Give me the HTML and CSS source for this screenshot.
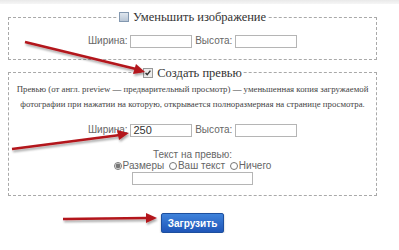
FILE: index.html
```html
<!DOCTYPE html>
<html lang="ru">
<head>
<meta charset="UTF-8" />
<meta name="viewport" content="width=device-width, initial-scale=1" />
<title>Загрузка изображения</title>
<link rel="stylesheet" href="styles.css">
</head>
<body>

<div class="topband"></div>

<form class="upload">
  <fieldset class="box box-resize">
    <legend><input type="checkbox" class="chk" /> Уменьшить изображение</legend>
    <div class="row">
      <label>Ширина:</label> <input type="text" class="num" />
      <label>Высота:</label> <input type="text" class="num" />
    </div>
  </fieldset>

  <fieldset class="box box-preview">
    <legend><input type="checkbox" class="chk" checked /> Создать превью</legend>
    <p class="note">Превью (от англ. preview — предварительный просмотр) — уменьшенная копия загружаемой<br>фотографии при нажатии на которую, открывается полноразмерная на странице просмотра.</p>
    <div class="row">
      <label>Ширина:</label> <input type="text" class="num" value="250" />
      <label>Высота:</label> <input type="text" class="num" />
    </div>
    <div class="caption">
      <div>Текст на превью:</div>
      <div class="radios">
        <label><input type="radio" name="cap" checked />Размеры</label>
        <label><input type="radio" name="cap" />Ваш текст</label>
        <label><input type="radio" name="cap" />Ничего</label>
      </div>
      <input type="text" class="captext" />
    </div>
  </fieldset>

  <div class="actions">
    <button type="button" class="btn">Загрузить</button>
  </div>
</form>

<!-- красные стрелки поверх скриншота -->
<svg class="arrows" width="399" height="250" viewBox="0 0 399 250">
  <defs>
    <filter id="sh" x="-10%" y="-50%" width="120%" height="200%">
      <feDropShadow dx="1" dy="2" stdDeviation="1.2" flood-color="#000" flood-opacity="0.35" />
    </filter>
  </defs>
  <g fill="#b3161b" stroke="#b3161b" filter="url(#sh)">
    <line x1="25" y1="42" x2="136" y2="69" stroke-width="2.6" />
    <polygon points="145,72 133,74 136,64" stroke="none" />
    <line x1="12" y1="149" x2="120" y2="135" stroke-width="2.6" />
    <polygon points="129,133 119,140 117,130" stroke="none" />
    <line x1="63" y1="219" x2="147" y2="218" stroke-width="2.6" />
    <polygon points="157,218 146,223 146,213" stroke="none" />
  </g>
</svg>

</body>
</html>
```

FILE: styles.css
```css
body {
  margin: 0;
  background: #fff;
  font-family: 'Liberation Serif', 'Times New Roman', serif;
  color: #333;
}
.topband {
  height: 4px;
  background: linear-gradient(#e9e9e9, #f6f6f6);
}
.upload {
  margin: 5px 0 0 8px;
  width: 369px;
}
.box {
  margin: 0;
  padding: 0 4px;
  border: 1px dashed #a9a9a9;
  box-sizing: border-box;
  width: 369px;
  text-align: center;
}
.box legend {
  margin: 0 auto;
  padding: 0 1px;
  font-size: 12.5px;
  line-height: 16px;
  color: #333;
}
.box-resize {
  padding-top: 9px;
  padding-bottom: 11px;
}
.box-preview {
  margin-top: 5px;
  padding-bottom: 10px;
}
.chk {
  appearance: none;
  width: 10px;
  height: 10px;
  margin: 0 1px 0 0;
  vertical-align: -1px;
  border: 1px solid #8398b0;
  background: linear-gradient(#dfe6ee, #b9c6d5);
}
.chk:checked {
  border-color: #999;
  background: #ececec url("data:image/svg+xml,%3Csvg xmlns='http://www.w3.org/2000/svg' viewBox='0 0 10 10'%3E%3Cpath d='M2 5l2 2 4-5' fill='none' stroke='%23333' stroke-width='1.8'/%3E%3C/svg%3E") center/8px no-repeat;
}
.row {
  font-family: 'Liberation Sans', Tahoma, sans-serif;
  font-size: 10px;
  line-height: 13px;
  color: #666;
}
.num {
  width: 62px;
  height: 13px;
  box-sizing: border-box;
  margin: 0;
  padding: 0 2px;
  border: 1px solid #b5b5b5;
  font-family: 'Liberation Sans', Tahoma, sans-serif;
  font-size: 11px;
  color: #333;
  vertical-align: middle;
}
.note {
  margin: 1px 0 11px;
  font-size: 8.8px;
  line-height: 15px;
  white-space: nowrap;
  color: #444;
}
.caption {
  margin-top: 12px;
  font-family: 'Liberation Sans', Tahoma, sans-serif;
  font-size: 10px;
  line-height: 11px;
  color: #666;
}
.radios label {
  margin: 0 1px;
}
.radios input {
  width: 8px;
  height: 8px;
  margin: 0 1px 0 0;
  vertical-align: -1px;
  accent-color: #777;
}
.captext {
  display: block;
  width: 121px;
  height: 13px;
  margin: 1px auto 0;
  box-sizing: border-box;
  border: 1px solid #b5b5b5;
}
.actions {
  margin-top: 17px;
  text-align: center;
}
.btn {
  width: 63px;
  height: 20px;
  padding: 0;
  border: 1px solid #1d4f9e;
  border-radius: 2px;
  background: linear-gradient(#3f83db, #1f56b8);
  box-shadow: 0 1px 2px rgba(0, 0, 0, 0.3);
  color: #fff;
  font-family: 'Liberation Sans', Tahoma, sans-serif;
  font-size: 10px;
  font-weight: bold;
}
.arrows {
  position: absolute;
  left: 0;
  top: 0;
  pointer-events: none;
}
```
